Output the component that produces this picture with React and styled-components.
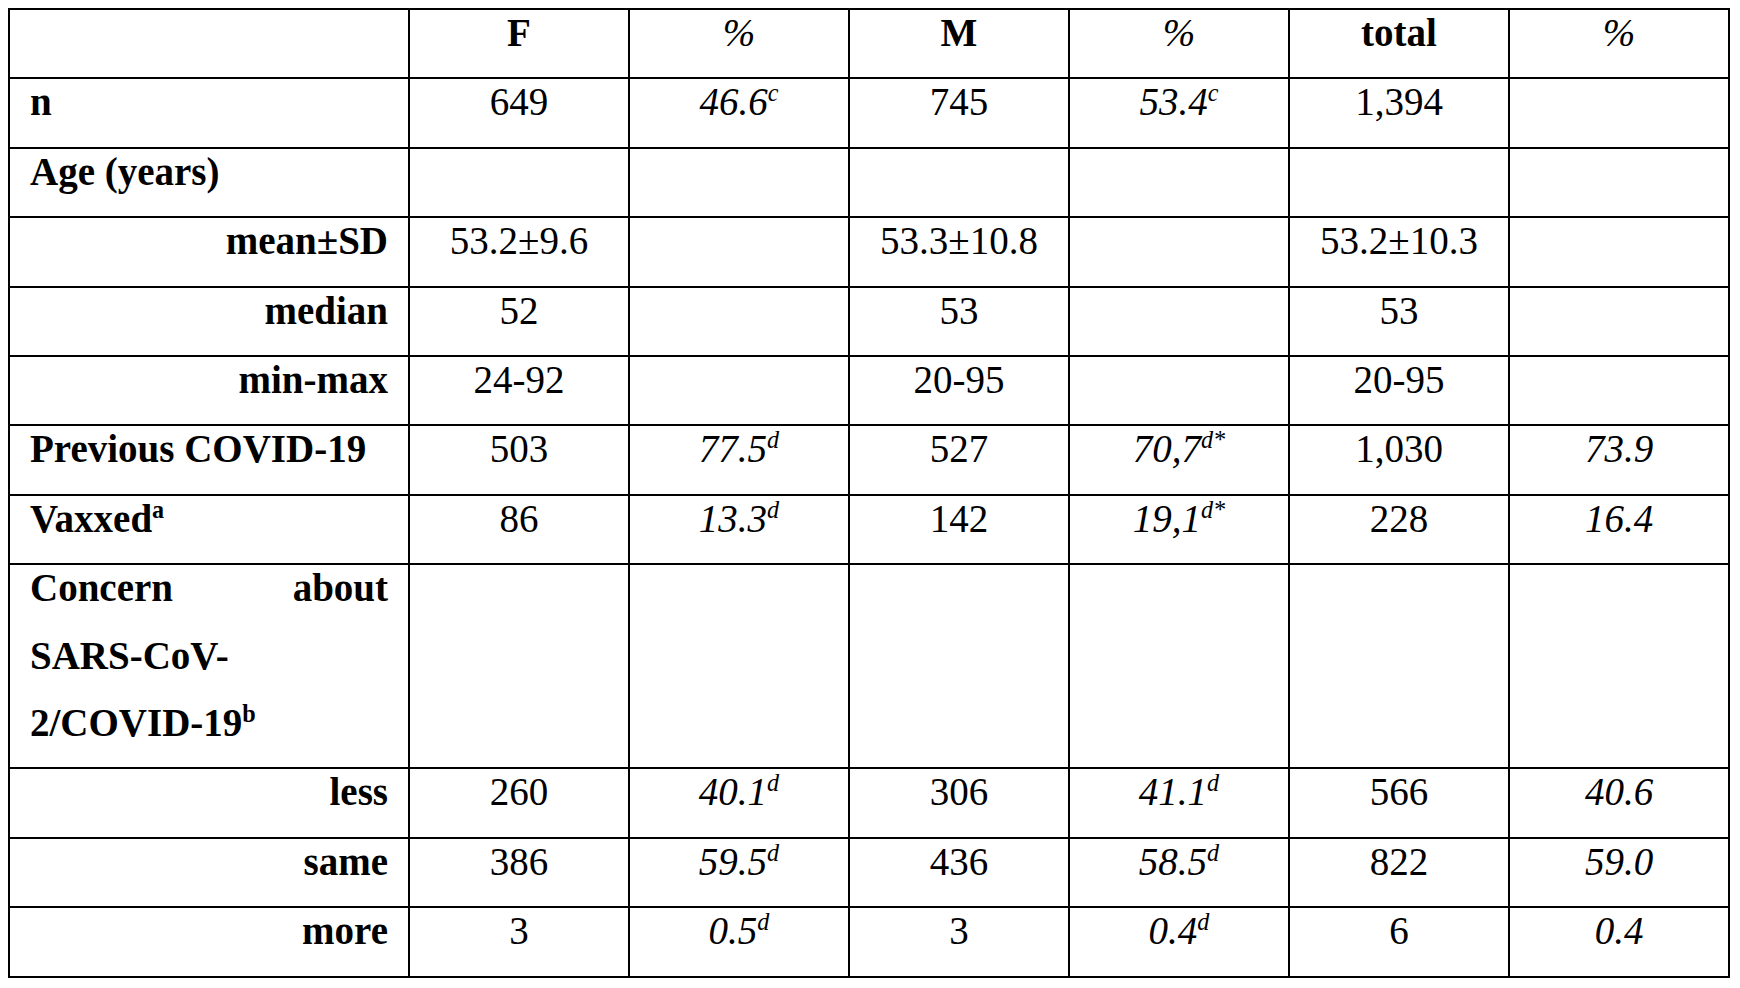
import styled, { createGlobalStyle } from "styled-components";

const GlobalStyle = createGlobalStyle`
  body {
    margin: 8px;
    background: #fff;
    color: #000;
    font-family: "Liberation Serif", "Times New Roman", serif;
  }
`;

const Table = styled.table`
  width: 1720px;
  table-layout: fixed;
  border-collapse: collapse;
  font-size: 39px;
  line-height: 67.4px;
`;

const Cell = styled.td`
  border: 2px solid #000;
  padding: 0 20px;
  vertical-align: top;
  text-align: ${(props) => props.align || "center"};
  font-weight: ${(props) => (props.bold ? 700 : 400)};
  font-style: ${(props) => (props.italic ? "italic" : "normal")};
`;

// Word puts the spacing of a line below the text, so lift the text a little
const Text = styled.div`
  margin: -11px 0 11px;
  white-space: nowrap;
`;

const Spread = styled.div`
  display: flex;
  justify-content: space-between;
`;

const Sup = styled.sup`
  font-size: 0.62em;
  line-height: 0;
`;

const rows = [
  { label: "n", cells: ["649", ["46.6", "c"], "745", ["53.4", "c"], "1,394", ""] },
  { label: "Age (years)", cells: ["", "", "", "", "", ""] },
  { label: "mean±SD", sub: true, cells: ["53.2±9.6", "", "53.3±10.8", "", "53.2±10.3", ""] },
  { label: "median", sub: true, cells: ["52", "", "53", "", "53", ""] },
  { label: "min-max", sub: true, cells: ["24-92", "", "20-95", "", "20-95", ""] },
  {
    label: "Previous COVID-19",
    cells: ["503", ["77.5", "d"], "527", ["70,7", "d*"], "1,030", ["73.9"]],
  },
  {
    label: ["Vaxxed", "a"],
    cells: ["86", ["13.3", "d"], "142", ["19,1", "d*"], "228", ["16.4"]],
  },
  { concern: true, cells: ["", "", "", "", "", ""] },
  { label: "less", sub: true, cells: ["260", ["40.1", "d"], "306", ["41.1", "d"], "566", ["40.6"]] },
  { label: "same", sub: true, cells: ["386", ["59.5", "d"], "436", ["58.5", "d"], "822", ["59.0"]] },
  { label: "more", sub: true, cells: ["3", ["0.5", "d"], "3", ["0.4", "d"], "6", ["0.4"]] },
];

const Value = ({ value }) => {
  if (Array.isArray(value)) {
    return (
      <Text>
        {value[0]}
        {value[1] && <Sup>{value[1]}</Sup>}
      </Text>
    );
  }
  return <Text>{value}</Text>;
};

const Label = ({ row }) => {
  if (row.concern) {
    return (
      <Cell bold align="left">
        <Text>
          <Spread>
            <span>Concern</span>
            <span>about</span>
          </Spread>
          <div>SARS-CoV-</div>
          <div>
            2/COVID-19<Sup>b</Sup>
          </div>
        </Text>
      </Cell>
    );
  }
  return (
    <Cell bold align={row.sub ? "right" : "left"}>
      <Value value={row.label} />
    </Cell>
  );
};

const App = () => {
  return (
    <>
      <GlobalStyle />
      <Table>
        <colgroup>
          <col style={{ width: 400 }} />
          {[0, 1, 2, 3, 4, 5].map((i) => (
            <col key={i} style={{ width: 220 }} />
          ))}
        </colgroup>
        <tbody>
          <tr>
            <Cell />
            <Cell bold>
              <Text>F</Text>
            </Cell>
            <Cell italic>
              <Text>%</Text>
            </Cell>
            <Cell bold>
              <Text>M</Text>
            </Cell>
            <Cell italic>
              <Text>%</Text>
            </Cell>
            <Cell bold>
              <Text>total</Text>
            </Cell>
            <Cell italic>
              <Text>%</Text>
            </Cell>
          </tr>
          {rows.map((row, r) => (
            <tr key={r}>
              <Label row={row} />
              {row.cells.map((value, i) => (
                <Cell key={i} italic={i % 2 === 1}>
                  <Value value={value} />
                </Cell>
              ))}
            </tr>
          ))}
        </tbody>
      </Table>
    </>
  );
};

export default App;
